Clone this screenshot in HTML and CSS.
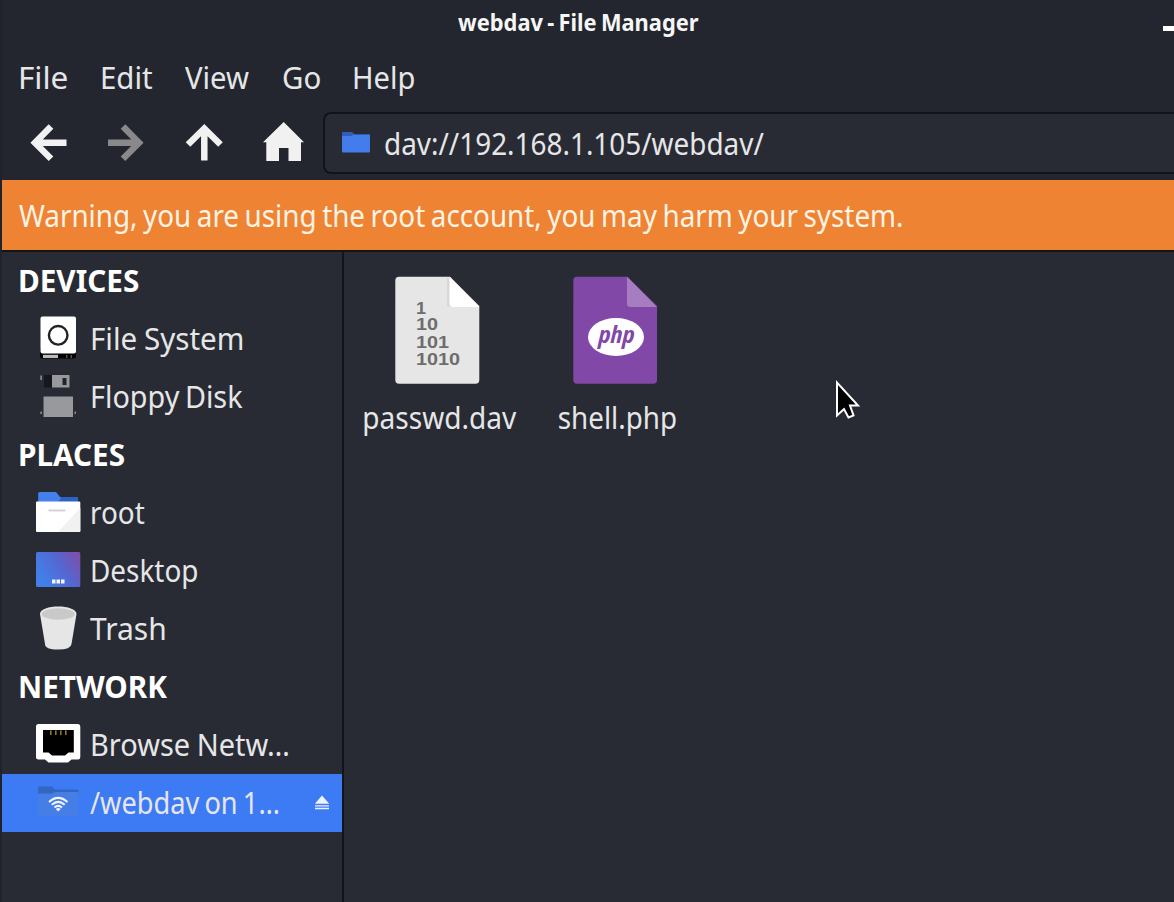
FILE: index.html
```
<!DOCTYPE html>
<html lang="en">
<head>
<meta charset="utf-8">
<title>webdav - File Manager</title>
<link rel="stylesheet" href="styles.css">
</head>
<body>
<div class="window">
  <header class="titlebar"><span class="t title">webdav - File Manager</span><span class="minimize"></span></header>
  <nav class="menubar">
    <a class="m-file"><span class="t">File</span></a>
    <a class="m-edit"><span class="t">Edit</span></a>
    <a class="m-view"><span class="t">View</span></a>
    <a class="m-go"><span class="t">Go</span></a>
    <a class="m-help"><span class="t">Help</span></a>
  </nav>
  <div class="toolbar">
    <svg class="tool" viewBox="28 121.500 42 42"><path d="M51 126 35 142.3 51 158.300M34 142.300H66.500" /></svg>
    <svg class="tool dim" viewBox="106 121.500 42 42"><path d="M123 126 139 142.3 123 158.300M140 142.300H108" /></svg>
    <svg class="tool" viewBox="184 121.500 42 42"><path d="M188 144 204.300 128 220.500 144M204.300 128V160" /></svg>
    <svg class="tool home" viewBox="262 121.500 42 42"><path d="M283.700 121.500 304 141.800H301V160.500H288.500V147.500H279V160.500H266.300V141.800H263Z" /></svg>
    <div class="pathbar">
      <svg class="pathicon" viewBox="342 132 28 21"><path fill="#2f5fb8" d="M342 135.500V133q0-1 1-1H352L354.500 134.200H369q1 0 1 1V143H342Z"/><path fill="#447cec" d="M342 136H351L353.500 134.700H370V151.500q0 1-1 1H343q-1 0-1-1Z"/></svg>
      <span class="t path">dav://192.168.1.105/webdav/</span>
    </div>
  </div>
  <div class="warning"><span class="t warn">Warning, you are using the root account, you may harm your system.</span></div>
  <main class="content">
    <aside class="sidebar">
      <h2><span class="t">DEVICES</span></h2>
      <div class="row">
        <svg class="ico" viewBox="34 315 48 48"><path fill="#000" d="M40 348H76V356.500q0 2-2 2H42q-2 0-2-2Z"/><rect x="40.500" y="316.500" width="35.500" height="37" rx="2" fill="#fff"/><circle cx="58.200" cy="335.300" r="9.300" fill="#fff" stroke="#222" stroke-width="2.400"/><path fill="#bbb" d="M43 354.800H58V358H43Z"/><path fill="#555" d="M66 355h1.500v3H66zM70.500 355H72v3h-1.500z"/></svg>
        <span class="t filesystem">File System</span>
      </div>
      <div class="row">
        <svg class="ico" viewBox="34 373 48 48"><path fill="#15171c" d="M44 375H53V387.500H44Z"/><path fill="#98999c" d="M52 375H69.500V387.500H52Z"/><path fill="#22242b" d="M62.500 378H66.500V385H62.500Z"/><path fill="#888" d="M40.300 375.500H42V380H40.300ZM40.300 411.500H42V414H40.300ZM74.500 411.500H76V414H74.500Z"/><path fill="#98999d" d="M43.500 396.500H73V417H43.500Z"/></svg>
        <span class="t floppy">Floppy Disk</span>
      </div>
      <h2><span class="t">PLACES</span></h2>
      <div class="row">
        <svg class="ico" viewBox="34 489 48 48"><path fill="#2c62c4" d="M50 497H78V510H50Z"/><path fill="#4480ec" d="M38.200 503V493.500q0-1.500 1.500-1.500H56L61 498 57 504Z"/><rect x="36" y="501.500" width="44.300" height="30.500" rx="1" fill="#fff"/><path fill="#f1f1f1" d="M80.300 508V531q0 1-1 1H58Z"/><path d="M48.500 510.500H65.500" stroke="#d0d0d0" stroke-width="1.800"/></svg>
        <span class="t root">root</span>
      </div>
      <div class="row">
        <svg class="ico" viewBox="34 547 48 48"><defs><linearGradient id="desk" x1="0" y1=".7" x2="1" y2=".2"><stop offset=".1" stop-color="#427fe9"/><stop offset=".6" stop-color="#5566cf"/><stop offset="1" stop-color="#7c50ad"/></linearGradient></defs><rect x="36" y="552" width="44.300" height="35" rx="1.500" fill="url(#desk)"/><path fill="#f4f4ff" d="M52 579.500h3.500v4H52zM56.500 579.500H60v4h-3.500zM61 579.500h3.500v4H61z"/></svg>
        <span class="t desktop">Desktop</span>
      </div>
      <div class="row">
        <svg class="ico" viewBox="34 605 48 48"><path fill="#e6e6e6" d="M40 614C40 604 76.500 604 76.500 614L71.500 644Q71 649.500 58 649.500T45 644Z"/><ellipse cx="58.200" cy="614" rx="16.500" ry="5.800" fill="#c9c9c9"/></svg>
        <span class="t trash">Trash</span>
      </div>
      <h2><span class="t">NETWORK</span></h2>
      <div class="row">
        <svg class="ico" viewBox="34 721 48 48"><path fill="#fff" d="M38.500 724H78Q80.300 724 80.300 726.500V757Q80.300 759.500 78 759.500H71.500L68 762.500H48.500L45 759.500H38.500Q36 759.500 36 757V726.500Q36 724 38.500 724Z"/><path fill="#000" d="M43 730H73.800V752.500H68.500L65 755.500H52L48.500 752.500H43Z"/><path d="M50.800 730.500V735M55.800 730.500V735M60.800 730.500V735M65.800 730.500V735" stroke="#9a7b36" stroke-width="1.500"/></svg>
        <span class="t browse">Browse Netw…</span>
      </div>
      <div class="row selected">
        <svg class="ico" viewBox="34 779 48 48"><path fill="#3465c0" d="M38 792V788q0-1.500 1.500-1.500H52L55 789.500H77q1.500 0 1.500 1.500V796H38Z"/><path fill="#447ee6" d="M38 793.500H52L55 792H78.500V815q0 1.500-1.500 1.500H39.500Q38 816.500 38 815Z"/><g fill="none" stroke="#f2f4ff" stroke-width="2"><path d="M49 802Q58.200 793.800 67.500 802"/><path d="M51.800 804.800Q58.200 799 64.700 804.800"/><path d="M54.500 807.500Q58.200 804.300 62 807.500"/></g><path fill="#f2f4ff" d="M55.800 809Q58.200 807 60.700 809L58.200 811.500Z"/></svg>
        <span class="t webdav">/webdav on 1…</span>
        <svg class="eject" viewBox="314 794.500 16 16"><path fill="#eef2fd" d="M322 795 329.200 803.300H314.800ZM315 804.800H329V806H315ZM315 807.300H329V808.800H315Z"/></svg>
      </div>
    </aside>
    <section class="files">
      <figure class="file">
        <svg class="fileicon" viewBox="395 276 85 108"><path fill="#e6e6e6" d="M399 276.700H450L479.300 306V380q0 3.700-3.700 3.700H399q-3.700 0-3.700-3.700V280.500q0-3.800 3.700-3.800Z"/><path fill="#d8d8d8" d="M447 278V304q0 3 3 3H470L450 277Z"/><path fill="#fff" d="M449.500 276.700 479.300 307H453q-3.500 0-3.500-3.500Z"/><g class="bits"><text x="416" y="313.500" textLength="10" lengthAdjust="spacingAndGlyphs">1</text><text x="416" y="330" textLength="22" lengthAdjust="spacingAndGlyphs">10</text><text x="416" y="348.300" textLength="33" lengthAdjust="spacingAndGlyphs">101</text><text x="416" y="364.700" textLength="44" lengthAdjust="spacingAndGlyphs">1010</text></g></svg>
        <figcaption><span class="t passwd">passwd.dav</span></figcaption>
      </figure>
      <figure class="file">
        <svg class="fileicon" viewBox="573 276 85 108"><path fill="#8248a7" d="M577 276.700H627.500L657 306V380q0 3.700-3.700 3.700H577q-3.700 0-3.700-3.700V280.500q0-3.800 3.700-3.800Z"/><path fill="#a67dc0" d="M627 276.700 657 307H630.500q-3.500 0-3.500-3.500Z"/><ellipse cx="616" cy="337" rx="28" ry="19" fill="#fff"/><text class="php" x="598.500" y="343" textLength="36" lengthAdjust="spacingAndGlyphs">php</text></svg>
        <figcaption><span class="t shell">shell.php</span></figcaption>
      </figure>
    </section>
  </main>
</div>
<svg class="cursor" viewBox="834 378 28 44"><path d="M837 382.500V415.500L844 409 848.500 417.500 853.500 415.500 850 405.500H858Z"/></svg>
</body>
</html>
```
FILE: styles.css
```
* { box-sizing: border-box; }
body {
  margin: 0;
  width: 1174px;
  height: 902px;
  overflow: hidden;
  background: #282b33;
  color: #e6e6e8;
  font: 30px/40px "Noto Sans", sans-serif;
}
.window {
  height: 902px;
  display: flex;
  flex-direction: column;
  border-left: 2px solid #20232a;
}
.t {
  --sx: 1;
  display: inline-block;
  white-space: nowrap;
  transform: scaleX(var(--sx));
  transform-origin: 0 50%;
}
.titlebar {
  height: 45px;
  background: #23262e;
  display: flex;
  align-items: center;
  justify-content: space-between;
  padding: 0 0 2px 456px;
}
.title { --sx: .930; font-size: 23.500px; font-weight: 700; word-spacing: -1.500px; color: #f6f6f6; }
.minimize { width: 11px; height: 5px; margin-top: 14px; background: #fff; }
.menubar {
  height: 63px;
  background: #23262e;
  display: flex;
  align-items: center;
  padding: 2px 0 0 16px;
}
.menubar a { height: 40px; }
.m-file { width: 82px; }
.m-file .t { --sx: 1.050; }
.m-edit { width: 85px; }
.m-edit .t { --sx: .980; }
.m-view { width: 97px; }
.m-view .t { --sx: .975; }
.m-go { width: 70px; }
.m-go .t { --sx: .980; }
.m-help .t { --sx: .970; }
.toolbar {
  height: 72px;
  background: #23262e;
  display: flex;
  align-items: center;
  gap: 36px;
  padding: 0 0 3px 26px;
}
.tool {
  width: 42px;
  height: 42px;
  flex: none;
  fill: none;
  stroke: #f1f1f1;
  stroke-width: 6.500px;
}
.tool.dim { stroke: #89898c; }
.tool.home { fill: #f1f1f1; stroke: none; }
.pathbar {
  height: 62px;
  flex: 1;
  margin-left: -17px;
  display: flex;
  align-items: center;
  padding-left: 17px;
  background: #282b34;
  border: 2px solid #111318;
  border-right: 0;
  border-radius: 8px 0 0 8px;
}
.pathicon { width: 28px; height: 21px; flex: none; }
.path { --sx: .930; margin: 2px 0 0 14px; }
.warning {
  height: 70px;
  background: #ed8333;
  color: #fff3e4;
  display: flex;
  align-items: center;
  padding: 1px 0 0 17px;
}
.warn { --sx: .927; word-spacing: -1.800px; }
.content { flex: 1; display: flex; border-top: 2px solid #121419; }
.sidebar { width: 342px; border-right: 2px solid #121419; }
.sidebar h2 {
  height: 58px;
  margin: 0;
  padding: 9px 0 0 16px;
  font: inherit;
  font-weight: 700;
  color: #fff;
}
.sidebar h2 .t { --sx: .990; }
.row {
  height: 58px;
  display: flex;
  align-items: center;
  padding-left: 32px;
}
.row .t { margin-left: 8px; }
.ico { width: 48px; height: 48px; flex: none; }
.row .filesystem { --sx: .985; word-spacing: -1px; }
.row .floppy { --sx: .960; word-spacing: -2px; }
.row .root, .row .desktop { --sx: .930; }
.row .browse { --sx: .965; word-spacing: -1px; }
.row .webdav { --sx: .905; word-spacing: -2px; }
.selected { background: #3d7bf5; }
.eject { width: 16px; height: 16px; margin-left: auto; margin-right: 12px; }
.files { display: flex; align-items: flex-start; padding: 24px 0 0 4px; }
.file {
  width: 178px;
  margin: 0;
  display: flex;
  flex-direction: column;
  align-items: center;
}
.fileicon { width: 85px; height: 108px; }
.file figcaption { width: 178px; height: 40px; margin-top: 14px; padding-left: 4px; text-align: center; }
.file .t { transform-origin: 50% 50%; }
.file .passwd { --sx: .935; }
.file .shell { --sx: .925; }
.bits { font: 700 16px "Liberation Sans", sans-serif; fill: #6d6d6d; }
.php { font: italic 700 24px "Open Sans", sans-serif; font-stretch: 75%; fill: #8248a7; }
.cursor { position: absolute; left: 834px; top: 378px; width: 28px; height: 44px; }
.cursor path { fill: #000; stroke: #fff; stroke-width: 2px; }
```
